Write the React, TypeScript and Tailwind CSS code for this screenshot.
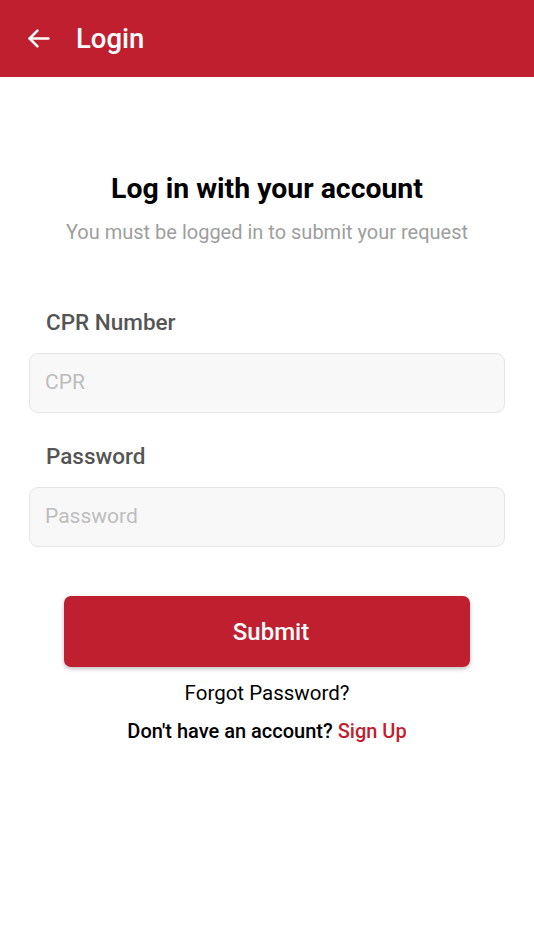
import React from "react";

export default function App() {
  return (
    <div className="w-[534px] h-[950px] bg-white flex flex-col" style={{ fontFamily: "Roboto, 'Noto Sans', sans-serif" }}>
      <header className="h-[77px] bg-[#bf1f2f] flex items-center pl-[26px] shrink-0">
        <svg width="25" height="25" viewBox="0 0 24 24" fill="none" stroke="white" strokeWidth="2.4" strokeLinecap="round" strokeLinejoin="round">
          <path d="M21.5 12H3.5" />
          <path d="M11 4.5 3.5 12 11 19.5" />
        </svg>
        <h1 className="ml-[25px] text-white text-[27.5px] font-medium leading-none">Login</h1>
      </header>
      <main className="flex flex-col">
        <h2 className="mt-[95px] text-center text-black text-[28.4px] font-bold leading-[34px]">Log in with your account</h2>
        <p className="mt-[14px] text-center text-[#9e9e9e] text-[20px] leading-[24px]">You must be logged in to submit your request</p>
        <div className="mt-[65px] px-[29px] flex flex-col">
          <label className="pl-[17px] text-[22.5px] font-medium text-[#555555] leading-[26px]">CPR Number</label>
          <div className="mt-[18px] h-[60px] rounded-[9px] border border-[#e6e6e6] bg-[#f8f8f8] flex items-center px-[15px]">
            <span className="text-[21px] text-[#bdbdbd]">CPR</span>
          </div>
          <label className="mt-[30px] pl-[17px] text-[22.5px] font-medium text-[#555555] leading-[26px]">Password</label>
          <div className="mt-[18px] h-[60px] rounded-[9px] border border-[#e6e6e6] bg-[#f8f8f8] flex items-center px-[15px]">
            <span className="text-[21px] text-[#bdbdbd]">Password</span>
          </div>
        </div>
        <div className="mt-[49px] px-[64px]">
          <button className="w-full h-[71px] pl-[8px] rounded-[7px] bg-[#bf1f2f] text-white text-[24px] font-medium shadow-[0_2px_4px_rgba(0,0,0,0.25)]">Submit</button>
        </div>
        <p className="mt-[14px] text-center text-[20.5px] text-black leading-[24px]">Forgot Password?</p>
        <p className="mt-[14px] text-center text-[20px] font-medium text-black leading-[24px]">
          Don't have an account? <span className="text-[#bf1f2f]">Sign Up</span>
        </p>
      </main>
    </div>
  );
}
